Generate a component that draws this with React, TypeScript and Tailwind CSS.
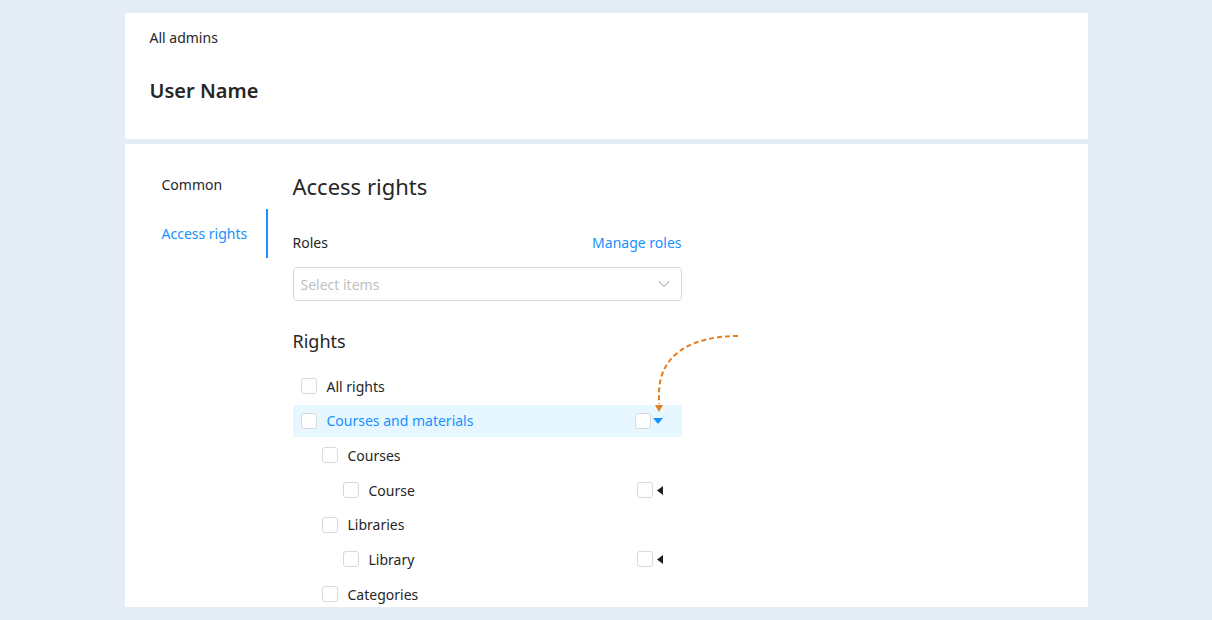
import React from "react";

type Row = {
  label: string;
  level: number;
  active?: boolean;
  extra?: "down" | "left";
};

const rows: Row[] = [
  { label: "All rights", level: 0 },
  { label: "Courses and materials", level: 0, active: true, extra: "down" },
  { label: "Courses", level: 1 },
  { label: "Course", level: 2, extra: "left" },
  { label: "Libraries", level: 1 },
  { label: "Library", level: 2, extra: "left" },
  { label: "Categories", level: 1 },
];

const indent: Record<number, string> = { 0: "pl-2", 1: "pl-[29px]", 2: "pl-[50px]" };

function Box() {
  return <span className="block h-4 w-4 shrink-0 rounded-[3px] border border-[#d9d9d9] bg-white" />;
}

function RightRow({ row }: { row: Row }) {
  return (
    <div
      className={`flex h-8 items-center pr-[19px] ${indent[row.level]} ${row.active ? "bg-[#e6f7ff]" : ""}`}
    >
      <Box />
      <span className={`ml-[10px] flex-1 text-[14px] ${row.active ? "text-[#1890ff]" : "text-[#262626]"}`}>
        {row.label}
      </span>
      {row.extra && (
        <div className="flex items-center">
          <Box />
          {row.extra === "down" ? (
            <svg width="10" height="6" viewBox="0 0 10 6" className="ml-[2px]">
              <path d="M0 0H10L5 6Z" fill="#1890ff" />
            </svg>
          ) : (
            <svg width="6" height="9" viewBox="0 0 6 9" className="ml-[4px]">
              <path d="M6 0V9L0 4.5Z" fill="#1f1f1f" />
            </svg>
          )}
        </div>
      )}
    </div>
  );
}

export default function App() {
  return (
    <div
      className="min-h-[620px] w-full bg-[#e4ecf6] pt-[13px] pb-[13px]"
      style={{ fontFamily: "'Noto Sans', Lato, sans-serif" }}
    >
      <div className="mx-auto w-[963px]">
        <div className="h-[126px] bg-white px-[25px] pt-[15px]">
          <div className="text-[14px] leading-[20px] text-[#262626]">All admins</div>
          <div className="mt-[30px] text-[20px] font-semibold leading-[26px] text-[#262626]">User Name</div>
        </div>

        <div className="relative mt-[5px] flex h-[463px] bg-white pt-4">
          <nav className="w-[143px] shrink-0 pl-[37px]">
            <div className="flex h-[49px] items-center text-[14px] text-[#262626]">Common</div>
            <div className="flex h-[49px] items-center border-r-2 border-[#1890ff] text-[14px] text-[#1890ff]">
              Access rights
            </div>
          </nav>

          <main className="ml-[25px] w-[389px]">
            <h1 className="mt-[12px] text-[22px] leading-[28px] text-[#262626]">Access rights</h1>
            <div className="mt-[33px] flex items-center justify-between text-[14px] leading-[20px]">
              <span className="text-[#262626]">Roles</span>
              <span className="text-[#1890ff]">Manage roles</span>
            </div>
            <div className="mt-[14px] flex h-[34px] items-center justify-between rounded-[4px] border border-[#d9d9d9] pl-[7px] pr-[11px]">
              <span className="text-[14px] text-[#bfbfbf]">Select items</span>
              <svg width="12" height="8" viewBox="0 0 12 8">
                <path d="M1 1.5L6 6.5L11 1.5" fill="none" stroke="#bfbfbf" strokeWidth="1.2" />
              </svg>
            </div>
            <h2 className="mt-[28px] text-[18px] leading-[24px] text-[#262626]">Rights</h2>
            <div className="mt-[17px] flex flex-col gap-[2.7px]">
              {rows.map((r) => (
                <RightRow key={r.label} row={r} />
              ))}
            </div>
          </main>

          {/* dashed pointer toward the row's expand toggle */}
          <svg
            className="pointer-events-none absolute left-[500px] top-[188px]"
            width="120"
            height="86"
            viewBox="0 0 120 86"
          >
            <path
              d="M113 4 C70 4 34 20 34 62 L34 72"
              fill="none"
              stroke="#e67e22"
              strokeWidth="2"
              strokeDasharray="5 3"
            />
            <path d="M30 73 L38 73 L34 80 Z" fill="#e67e22" />
          </svg>
        </div>
      </div>
    </div>
  );
}
